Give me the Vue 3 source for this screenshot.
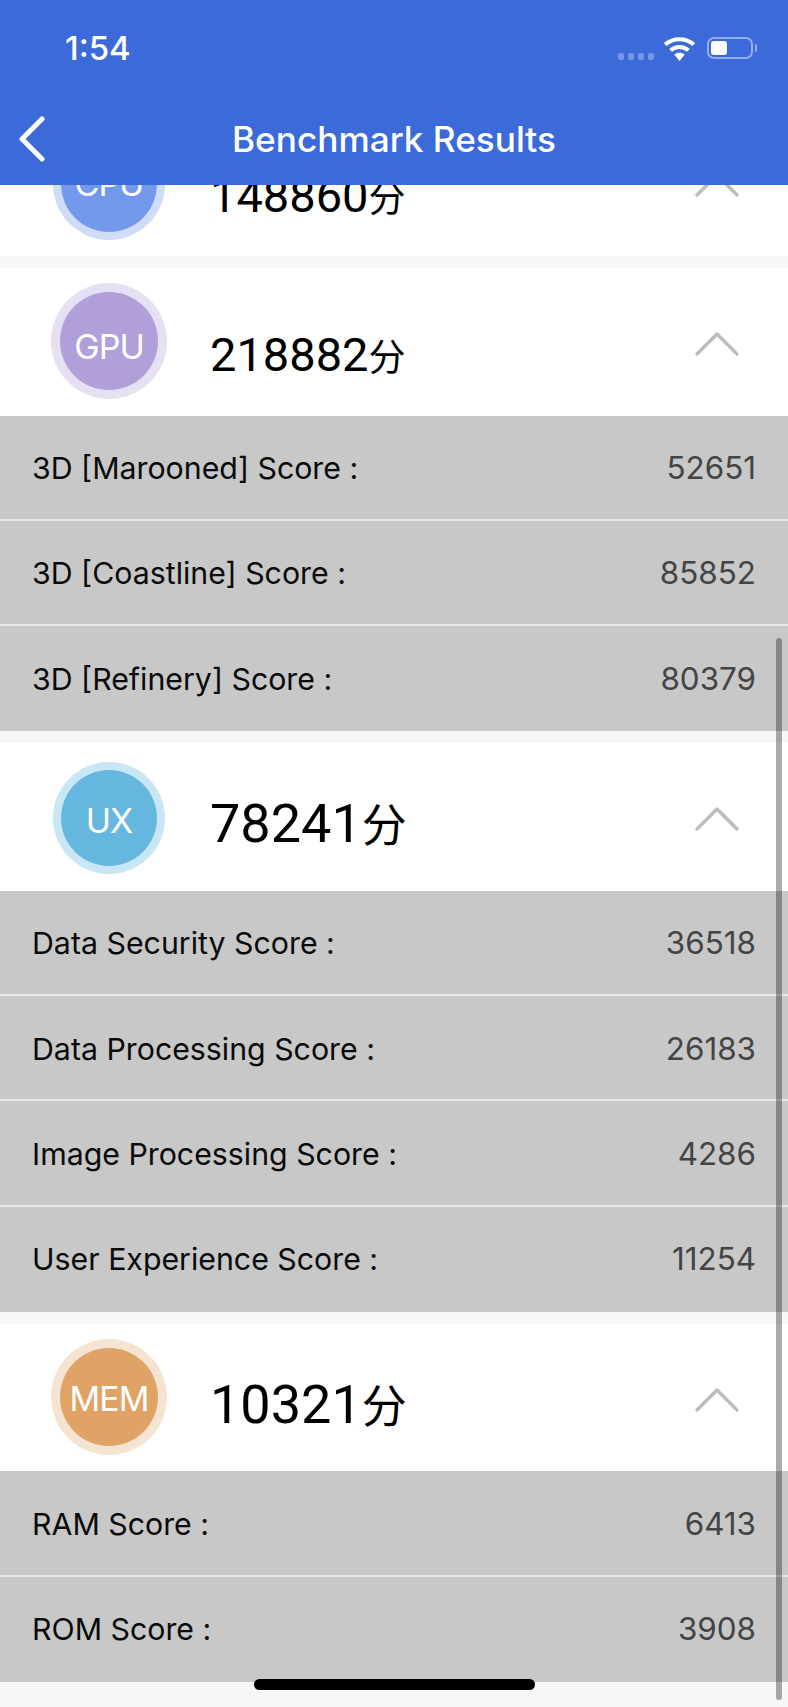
<template>
  <div class="screen">
    <header class="nav">
      <div class="status">
        <span class="time">1:54</span>
        <div class="status-icons">
          <div class="dots"><i></i><i></i><i></i><i></i></div>
          <svg class="wifi" width="33" height="24" viewBox="0 0 33 24">
            <path d="M16.5 24 L11.2 17.6 C14.2 15 18.8 15 21.8 17.6 Z" fill="#fff" />
            <path d="M7.6 13.4 C12.6 8.8 20.4 8.8 25.4 13.4" fill="none" stroke="#fff" stroke-width="4" />
            <path d="M2.2 7.6 C10.2 0.4 22.8 0.4 30.8 7.6" fill="none" stroke="#fff" stroke-width="4" />
          </svg>
          <div class="battery"><div class="battery-fill"></div></div>
          <div class="battery-nub"></div>
        </div>
      </div>
      <div class="titlebar">
        <svg class="back" width="28" height="46" viewBox="0 0 28 46">
          <path d="M23 3 L3 23 L23 43" fill="none" stroke="#fff" stroke-width="5" stroke-linecap="round" stroke-linejoin="round" />
        </svg>
        <h1>Benchmark Results</h1>
      </div>
    </header>

    <div class="list">
      <section v-for="s in sections" :key="s.name" :class="['section', s.cut ? 'cut' : '']">
        <div class="head">
          <div :class="['badge', s.name.toLowerCase()]">
            <div class="badge-inner">{{ s.name }}</div>
          </div>
          <div :class="['score', s.score.length > 5 ? 'fit-6' : 'fit-5']">
            {{ s.score }}<span class="fen">分</span>
          </div>
          <svg class="chev" width="46" height="26" viewBox="0 0 46 26">
            <path d="M3 23 L23 3 L43 23" fill="none" stroke="#bdbdbd" stroke-width="3.5" stroke-linecap="round" stroke-linejoin="round" />
          </svg>
        </div>
        <div v-for="r in s.rows" :key="r[0]" class="row">
          <span class="label">{{ r[0] }}</span>
          <span class="value">{{ r[1] }}</span>
        </div>
      </section>
    </div>

    <div class="scrollbar"></div>
    <div class="home"></div>
  </div>
</template>

<script setup>
const sections = [
  { name: 'CPU', score: '148860', cut: true, rows: [] },
  {
    name: 'GPU',
    score: '218882',
    rows: [
      ['3D [Marooned] Score :', '52651'],
      ['3D [Coastline] Score :', '85852'],
      ['3D [Refinery] Score :', '80379'],
    ],
  },
  {
    name: 'UX',
    score: '78241',
    rows: [
      ['Data Security Score :', '36518'],
      ['Data Processing Score :', '26183'],
      ['Image Processing Score :', '4286'],
      ['User Experience Score :', '11254'],
    ],
  },
  {
    name: 'MEM',
    score: '10321',
    rows: [
      ['RAM Score :', '6413'],
      ['ROM Score :', '3908'],
    ],
  },
]
</script>

<style>
html, body {
  margin: 0;
  background: #f7f7f7;
}
</style>

<style scoped>
.screen {
  width: 788px;
  height: 1707px;
  position: relative;
  overflow: hidden;
  background: #f7f7f7;
  font-family: Inter, "Noto Sans CJK SC", sans-serif;
  display: flex;
  flex-direction: column;
}

.nav {
  flex: none;
  height: 185px;
  background: #3c6bd9;
  color: #fff;
  position: relative;
  z-index: 2;
}

.status {
  height: 96px;
  box-sizing: border-box;
  padding: 30px 31px 0 65px;
  display: flex;
  justify-content: space-between;
  align-items: flex-start;
}

.time {
  font-size: 33px;
  line-height: 36px;
  font-weight: 500;
}

.status-icons {
  display: flex;
  align-items: flex-start;
  padding-top: 7px;
}

.dots {
  display: flex;
  gap: 4px;
  margin: 16px 9px 0 0;
}

.dots i {
  width: 6px;
  height: 7px;
  border-radius: 2px;
  background: rgba(255, 255, 255, 0.3);
}

.wifi {
  display: block;
  margin-right: 11px;
}

.battery {
  width: 46px;
  height: 22px;
  box-sizing: border-box;
  border: 2px solid rgba(255, 255, 255, 0.45);
  border-radius: 7px;
  padding: 2px;
}

.battery-fill {
  width: 16px;
  height: 14px;
  background: #fff;
  border-radius: 3px;
}

.battery-nub {
  width: 2px;
  height: 8px;
  margin: 7px 0 0 2px;
  background: rgba(255, 255, 255, 0.45);
  border-radius: 0 2px 2px 0;
}

.titlebar {
  height: 89px;
  box-sizing: border-box;
  padding-bottom: 4px;
  display: flex;
  align-items: center;
  justify-content: center;
  position: relative;
}

.titlebar h1 {
  margin: 0;
  font-size: 35.2px;
  font-weight: 500;
}

.back {
  position: absolute;
  left: 19px;
  top: 20px;
}

.list {
  flex: 1;
  display: flex;
  flex-direction: column;
  gap: 12px;
}

.section {
  background: #fff;
}

/* first block is scrolled under the nav bar */
.cut {
  height: 71px;
  overflow: hidden;
  display: flex;
  flex-direction: column;
  justify-content: flex-end;
}

.head {
  flex: none;
  height: 147.5px;
  box-sizing: border-box;
  padding: 15px 48px 0 51px;
  display: flex;
  align-items: flex-start;
}

.badge {
  flex: none;
  width: 116px;
  height: 116px;
  box-sizing: border-box;
  border-radius: 50%;
  padding: 9px;
}

.badge.cpu,
.badge.ux {
  width: 112px;
  height: 112px;
  margin: 4px 2px 0;
  padding: 8px;
}

.badge-inner {
  width: 100%;
  height: 100%;
  box-sizing: border-box;
  border-radius: 50%;
  display: flex;
  align-items: center;
  justify-content: center;
  color: #fff;
  font-size: 34px;
  letter-spacing: -1px;
}

.cpu { background: #cfdcf8; }
.cpu .badge-inner { background: #7399ea; }
.gpu { background: #e6e0f3; }
.gpu .badge-inner { background: #b09fd8; padding-top: 11px; }
.ux { background: #c8e6f3; }
.ux .badge-inner { background: #66b7e0; padding-top: 5px; }
.mem { background: #f6e4d3; }
.mem .badge-inner { background: #dfa465; padding-top: 3px; }

.score {
  flex: 1;
  margin-left: 43px;
  color: #000;
  white-space: nowrap;
  font-family: Roboto, "Noto Sans CJK SC", sans-serif;
}

.fit-6 {
  font-size: 47px;
  line-height: 60px;
  margin-top: 42px;
}

.fit-6 .fen {
  font-size: 37px;
}

.fit-5 {
  font-size: 54px;
  line-height: 66px;
  margin-top: 33px;
}

.fit-5 .fen {
  font-size: 45px;
}

.chev {
  flex: none;
  margin-top: 48px;
}

.row {
  height: 105.25px;
  box-sizing: border-box;
  padding: 2px 32px 0;
  background: #c8c8c8;
  border-bottom: 2px solid #e8e8e8;
  display: flex;
  align-items: center;
  justify-content: space-between;
  font-size: 30.3px;
}

.row:last-child {
  padding-top: 0;
  border-bottom: none;
}

.label {
  color: #0a0a0a;
}

.value {
  color: #444;
  font-size: 31.4px;
}

.scrollbar {
  position: absolute;
  left: 776px;
  top: 638px;
  width: 6px;
  height: 1062px;
  border-radius: 3px;
  background: rgba(0, 0, 0, 0.33);
  z-index: 3;
}

.home {
  position: absolute;
  left: 254px;
  top: 1679px;
  width: 281px;
  height: 11px;
  border-radius: 6px;
  background: #000;
  z-index: 3;
}
</style>
